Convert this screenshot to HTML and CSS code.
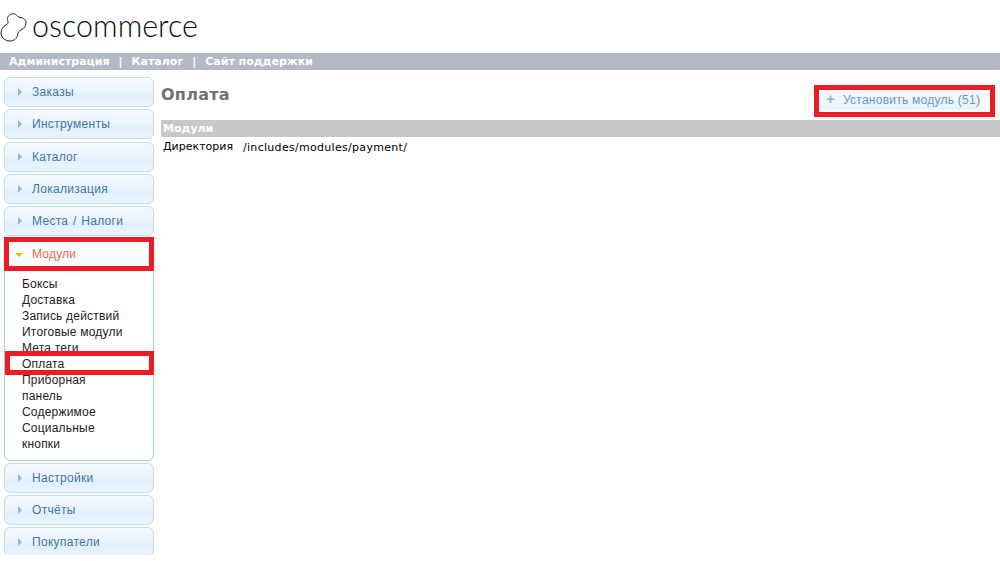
FILE: index.html
```html
<!DOCTYPE html>
<html lang="ru">
<head>
<meta charset="utf-8">
<title>osCommerce</title>
<link rel="stylesheet" href="styles.css">
</head>
<body>
<div class="page">
  <header class="logo">
    <svg class="logo-mark" width="27" height="30" viewBox="0 0 27 30" fill="none" stroke="#222" stroke-width="1">
      <path d="M13.300 0.700C9.500 0.700 7 4 7.500 6.500C8 9.500 9 10 6.500 11.500C3 13.500 1 16.500 1 20C1 24.500 5 28 10 28C14 28 17 25.500 17.500 22C18 19 18.500 18.500 21 17C24 15.500 26 13 26 10C26 6.500 23 4.500 20 4.500C17 4.500 17 0.700 13.300 0.700Z"/>
    </svg>
    <span class="logo-text">oscommerce</span>
  </header>
  <nav class="topbar">
    <a>Администрация</a><span class="sep">|</span><a>Каталог</a><span class="sep">|</span><a>Сайт поддержки</a>
  </nav>
  <div class="main">
    <aside class="side">
      <div class="acc"><i class="tri"></i>Заказы</div>
      <div class="acc"><i class="tri"></i>Инструменты</div>
      <div class="acc"><i class="tri"></i>Каталог</div>
      <div class="acc"><i class="tri"></i>Локализация</div>
      <div class="acc"><i class="tri"></i>Места / Налоги</div>
      <div class="acc-open">
        <div class="acc-head"><i class="tri-down"></i>Модули</div>
        <ul class="sub">
          <li>Боксы</li>
          <li>Доставка</li>
          <li>Запись действий</li>
          <li class="nowrap">Итоговые модули</li>
          <li>Мета теги</li>
          <li>Оплата</li>
          <li>Приборная панель</li>
          <li>Содержимое</li>
          <li>Социальные кнопки</li>
        </ul>
      </div>
      <div class="acc"><i class="tri"></i>Настройки</div>
      <div class="acc"><i class="tri"></i>Отчёты</div>
      <div class="acc"><i class="tri"></i>Покупатели</div>
    </aside>
    <main class="content">
      <div class="title-row">
        <h1>Оплата</h1>
        <button class="install"><span class="plus">+</span>Установить модуль (51)</button>
      </div>
      <div class="table-head">Модули</div>
      <div class="info"><span class="info-key">Директория</span><span class="info-val">/includes/modules/payment/</span></div>
    </main>
  </div>
  <div class="mark mark-head"></div>
  <div class="mark mark-item"></div>
  <div class="mark mark-btn"></div>
</div>
</body>
</html>
```
FILE: styles.css
```css
html, body { margin: 0; padding: 0; background: #fff; }
.page { position: relative; width: 1000px; height: 555px; overflow: hidden; font-family: "Liberation Sans", Arial, sans-serif; }

.logo { height: 53px; display: flex; align-items: center; box-sizing: border-box; padding: 0; }
.logo-mark { display: block; margin-top: 3px; }
.logo-text { font-family: "Lato", sans-serif; font-weight: 300; font-size: 30.500px; color: #111; margin-left: 5px; margin-top: -4px; }

.topbar { height: 17px; background: #b3bac5; color: #fff; font-family: "DejaVu Sans", sans-serif; font-weight: bold; font-size: 11px; line-height: 17px; padding-left: 9px; }
.sep { margin: 0 9px; }

.main { display: flex; align-items: flex-start; padding-top: 7px; }
.side { width: 150px; margin-left: 4px; flex: none; display: flex; flex-direction: column; gap: 2px; }

.acc { height: 28px; border: 1px solid #c5dbec; border-radius: 6px; background: linear-gradient(#f4f9fe 0, #eaf4fd 50%, #dfeffc 60%, #eaf4fd 100%); color: #3f77a5; font-size: 12px; line-height: 28px; letter-spacing: 0.300px; word-spacing: 1px; padding-left: 27px; position: relative; flex: none; }
.acc:nth-child(3) { margin-top: 1px; }
.tri { position: absolute; left: 13px; top: 10px; width: 0; height: 0; border-left: 4px solid #8db8da; border-top: 4px solid transparent; border-bottom: 4px solid transparent; }

.acc-open { border: 1px solid #a6c9e2; border-radius: 6px; background: #fff; flex: none; }
.acc-head { height: 31px; line-height: 31px; font-size: 12px; letter-spacing: 0.200px; color: #e0704a; padding-left: 27px; position: relative; background: linear-gradient(#fff, #f4f8fb); }
.tri-down { position: absolute; left: 10px; top: 14px; width: 0; height: 0; border-top: 4px solid #f5b800; border-left: 4px solid transparent; border-right: 4px solid transparent; }
.sub { list-style: none; margin: 0; padding: 6px 30px 8px 17px; font-size: 12px; line-height: 16px; letter-spacing: 0.200px; color: #222; }
.nowrap { white-space: nowrap; }

.content { flex: 1; padding-left: 7px; min-width: 0; }
.title-row { display: flex; justify-content: space-between; align-items: flex-start; height: 43px; }
h1 { margin: 0; padding-top: 9px; font-family: "DejaVu Sans", sans-serif; font-weight: bold; font-size: 16px; letter-spacing: 0.250px; line-height: 18px; color: #727272; }
.install { margin: 12px 20px 0 0; width: 162px; height: 21px; border: 0; padding: 0 0 0 8px; text-align: left; background: linear-gradient(#f4f9fe, #e8f3fc); color: #6d97bd; font-family: "Liberation Sans", sans-serif; font-size: 12px; letter-spacing: 0.250px; white-space: nowrap; }
.plus { display: inline-block; width: 17px; color: #8cb8dc; font-size: 15px; font-weight: bold; line-height: 12px; }
.table-head { height: 17px; background: #c8c8c8; color: #fff; font-family: "DejaVu Sans", sans-serif; font-weight: bold; font-size: 11px; line-height: 18px; padding-left: 2px; }
.info { display: flex; font-family: "DejaVu Sans", sans-serif; font-size: 11px; line-height: 14px; color: #000; padding: 3px 0 0 2px; }
.info-key { width: 80px; }
.info-val { font-size: 11px; letter-spacing: 0.300px; margin-top: 1px; }

.mark { position: absolute; border: 5px solid #ed1c24; box-sizing: border-box; }
.mark-head { left: 4px; top: 237px; width: 150px; height: 34px; }
.mark-item { left: 5px; top: 351px; width: 149px; height: 24px; }
.mark-btn { left: 814px; top: 85px; width: 181px; height: 32px; }
```
